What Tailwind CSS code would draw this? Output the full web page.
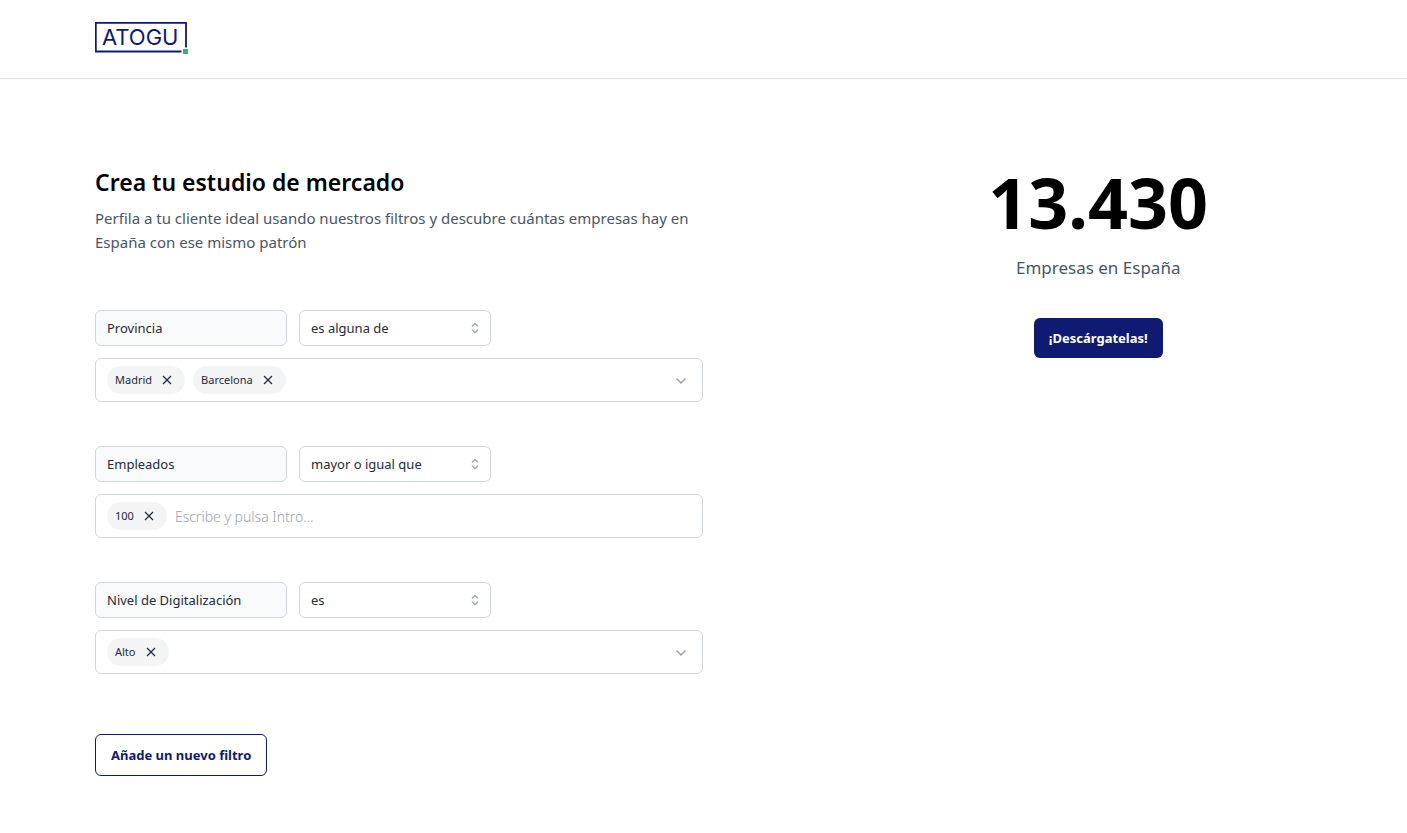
<!DOCTYPE html>
<html lang="es">

<head>
    <meta charset="UTF-8">
    <meta name="viewport" content="width=device-width, initial-scale=1.0">
    <title>Atogu - Estudio de mercado</title>
    <script src="https://cdn.jsdelivr.net/npm/@tailwindcss/browser@4"></script>
</head>

<body class="min-h-screen bg-white font-['Noto_Sans',sans-serif] text-gray-800">
    <header class="border-b border-gray-200">
        <div class="max-w-[1281px] mx-auto pl-8 pr-[33px] pt-5 pb-6">
            <a href="#" class="block w-24" aria-label="Atogu">
                <svg class="block" width="96" height="34" viewBox="0 0 96 34" fill="none">
                    <path d="M86.500 31.500H.8V2.800H91V27.500" stroke="#0f1a73" stroke-width="1.8" />
                    <path d="M88 29h5v5h-5z" fill="#34ad87" />
                    <text x="7" y="25" font-family="Inter" font-size="22" fill="#0f1a73">ATOGU</text>
                </svg>
            </a>
        </div>
    </header>

    <main class="max-w-[1281px] mx-auto pl-8 pr-[33px] pt-[83px] pb-14 flex justify-between">
        <section class="w-1/2">
            <h1 class="pt-1 text-[23px] leading-8 font-semibold text-black">Crea tu estudio de mercado</h1>
            <p class="mt-2 text-[15px] leading-6 text-gray-600">Perfila a tu cliente ideal usando nuestros filtros y descubre cuántas empresas hay en España con ese mismo patrón</p>

            <form class="mt-14">
                <div class="space-y-11">
                    <!-- Provincia -->
                    <div class="space-y-3">
                        <div class="flex gap-3">
                            <input type="text" readonly value="Provincia" aria-label="Filtro" class="w-48 h-9 px-[11px] text-[13px] leading-5 bg-gray-50 border border-gray-300 rounded-md">
                            <div class="relative w-48">
                                <select aria-label="Condición de provincia" class="appearance-none w-full h-9 px-[11px] text-[13px] leading-5 bg-white border border-gray-300 rounded-md">
                                    <option>es alguna de</option>
                                </select>
                                <svg class="absolute right-1.5 top-2 size-5 pointer-events-none text-gray-400" viewBox="0 0 20 20" fill="none" stroke="currentColor">
                                    <path d="M7.300 8L10 5.300l2.700 2.700M7.300 12l2.700 2.700 2.700-2.700" stroke-width="1.2" stroke-linecap="round" stroke-linejoin="round" />
                                </svg>
                            </div>
                        </div>
                        <div class="flex items-center gap-2 h-11 px-[11px] border border-gray-300 rounded-md">
                            <span class="flex items-center gap-[5px] h-7 px-2 rounded-full bg-gray-100 text-[11px]">Madrid
                                <button type="button" aria-label="Quitar Madrid"><svg class="size-5" viewBox="0 0 20 20" stroke="currentColor" stroke-width="1.2"><path d="M6 6l8 8M14 6l-8 8" /></svg></button>
                            </span>
                            <span class="flex items-center gap-[5px] h-7 px-2 rounded-full bg-gray-100 text-[11px]">Barcelona
                                <button type="button" aria-label="Quitar Barcelona"><svg class="size-5" viewBox="0 0 20 20" stroke="currentColor" stroke-width="1.2"><path d="M6 6l8 8M14 6l-8 8" /></svg></button>
                            </span>
                            <button type="button" aria-label="Ver provincias" class="ml-auto text-gray-400"><svg class="size-5" viewBox="0 0 20 20" fill="none" stroke="currentColor" stroke-width="1.5"><path d="M5.500 8.500l4.500 4.500 4.500-4.500" /></svg></button>
                        </div>
                    </div>

                    <!-- Empleados -->
                    <div class="space-y-3">
                        <div class="flex gap-3">
                            <input type="text" readonly value="Empleados" aria-label="Filtro" class="w-48 h-9 px-[11px] text-[13px] leading-5 bg-gray-50 border border-gray-300 rounded-md">
                            <div class="relative w-48">
                                <select aria-label="Condición de empleados" class="appearance-none w-full h-9 px-[11px] text-[13px] leading-5 bg-white border border-gray-300 rounded-md">
                                    <option>mayor o igual que</option>
                                </select>
                                <svg class="absolute right-1.5 top-2 size-5 pointer-events-none text-gray-400" viewBox="0 0 20 20" fill="none" stroke="currentColor">
                                    <path d="M7.300 8L10 5.300l2.700 2.700M7.300 12l2.700 2.700 2.700-2.700" stroke-width="1.2" stroke-linecap="round" stroke-linejoin="round" />
                                </svg>
                            </div>
                        </div>
                        <div class="flex items-center gap-2 h-11 px-[11px] border border-gray-300 rounded-md">
                            <span class="flex items-center gap-[5px] h-7 px-2 rounded-full bg-gray-100 text-[11px]">100
                                <button type="button" aria-label="Quitar 100"><svg class="size-5" viewBox="0 0 20 20" stroke="currentColor" stroke-width="1.2"><path d="M6 6l8 8M14 6l-8 8" /></svg></button>
                            </span>
                            <input type="text" aria-label="Número de empleados" placeholder="Escribe y pulsa Intro…" class="grow h-7 text-sm font-light placeholder:text-gray-400 focus:outline-none">
                        </div>
                    </div>

                    <!-- Digitalización -->
                    <div class="space-y-3">
                        <div class="flex gap-3">
                            <input type="text" readonly value="Nivel de Digitalización" aria-label="Filtro" class="w-48 h-9 px-[11px] text-[13px] leading-5 bg-gray-50 border border-gray-300 rounded-md">
                            <div class="relative w-48">
                                <select aria-label="Condición de digitalización" class="appearance-none w-full h-9 px-[11px] text-[13px] leading-5 bg-white border border-gray-300 rounded-md">
                                    <option>es</option>
                                </select>
                                <svg class="absolute right-1.5 top-2 size-5 pointer-events-none text-gray-400" viewBox="0 0 20 20" fill="none" stroke="currentColor">
                                    <path d="M7.300 8L10 5.300l2.700 2.700M7.300 12l2.700 2.700 2.700-2.700" stroke-width="1.2" stroke-linecap="round" stroke-linejoin="round" />
                                </svg>
                            </div>
                        </div>
                        <div class="flex items-center gap-2 h-11 px-[11px] border border-gray-300 rounded-md">
                            <span class="flex items-center gap-[5px] h-7 px-2 rounded-full bg-gray-100 text-[11px]">Alto
                                <button type="button" aria-label="Quitar Alto"><svg class="size-5" viewBox="0 0 20 20" stroke="currentColor" stroke-width="1.2"><path d="M6 6l8 8M14 6l-8 8" /></svg></button>
                            </span>
                            <button type="button" aria-label="Ver niveles" class="ml-auto text-gray-400"><svg class="size-5" viewBox="0 0 20 20" fill="none" stroke="currentColor" stroke-width="1.5"><path d="M5.500 8.500l4.500 4.500 4.500-4.500" /></svg></button>
                        </div>
                    </div>
                </div>

                <button type="button" class="mt-15 h-[42px] px-[15px] text-[13px] leading-5 font-bold text-[#0f1a73] border border-[#0f1a73] rounded-md">Añade un nuevo filtro</button>
            </form>
        </section>

        <aside class="w-[35%] pt-1 text-center">
            <p class="text-[70px] leading-18 font-bold text-black">13.430</p>
            <p class="mt-4 text-[17px] leading-7 text-gray-600">Empresas en España</p>
            <button type="button" class="mt-9 h-10 px-[15px] text-[13px] leading-5 font-bold text-white bg-[#0f1a73] rounded-md">¡Descárgatelas!</button>
        </aside>
    </main>
</body>

</html>
